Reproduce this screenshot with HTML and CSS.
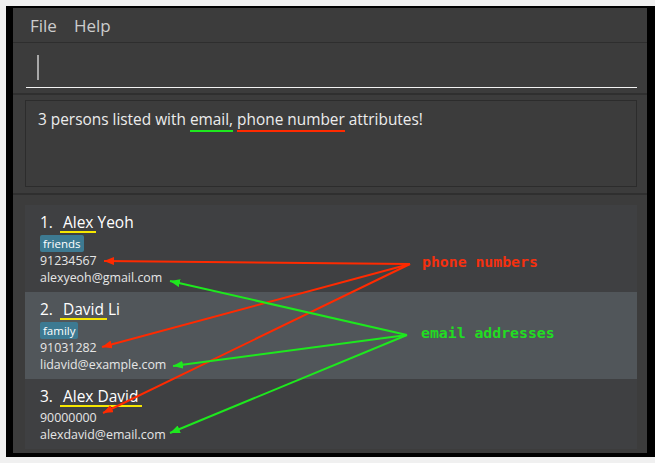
FILE: index.html
```html
<!DOCTYPE html>
<html>
<head>
<meta charset="utf-8">
<link rel="stylesheet" href="styles.css">
</head>
<body>
<div class="frame">
  <div class="window">
    <div class="menubar"><span>File</span><span>Help</span></div>
    <div class="command"><div class="field"><span class="caret"></span></div></div>
    <div class="result">
      <div class="resultbox">
        <p class="msg">3 persons listed with <span class="ul ul-green">email,</span> <span class="ul ul-red">phone number</span> attributes!</p>
      </div>
    </div>
    <div class="list">
      <div class="card">
        <div class="name"><span class="idx">1.</span><span class="hl">Alex</span> Yeoh</div>
        <div class="tags"><span class="tag">friends</span></div>
        <div class="detail">91234567</div>
        <div class="detail">alexyeoh@gmail.com</div>
      </div>
      <div class="card card-alt">
        <div class="name"><span class="idx">2.</span><span class="hl">David</span> Li</div>
        <div class="tags"><span class="tag">family</span></div>
        <div class="detail">91031282</div>
        <div class="detail">lidavid@example.com</div>
      </div>
      <div class="card card-last">
        <div class="name"><span class="idx">3.</span><span class="hl">Alex</span> <span class="hl">David</span></div>
        <div class="detail">90000000</div>
        <div class="detail">alexdavid@email.com</div>
      </div>
    </div>
  </div>
</div>
<svg class="overlay" width="655" height="463" viewBox="0 0 655 463">
  <defs>
    <marker id="ar" viewBox="0 0 10 8" refX="10" refY="4" markerWidth="10" markerHeight="8" markerUnits="userSpaceOnUse" orient="auto">
      <path d="M0,0 L10,4 L0,8 z" fill="#ff2a00"/>
    </marker>
    <marker id="ag" viewBox="0 0 10 8" refX="10" refY="4" markerWidth="10" markerHeight="8" markerUnits="userSpaceOnUse" orient="auto">
      <path d="M0,0 L10,4 L0,8 z" fill="#1ee81e"/>
    </marker>
  </defs>
  <g stroke="#ff2a00" stroke-width="2" marker-end="url(#ar)">
    <line x1="410" y1="264" x2="104" y2="261"/>
    <line x1="410" y1="264" x2="102" y2="347"/>
    <line x1="410" y1="264" x2="103" y2="413"/>
  </g>
  <g stroke="#1ee81e" stroke-width="2" marker-end="url(#ag)">
    <line x1="407" y1="335" x2="170" y2="281"/>
    <line x1="407" y1="335" x2="173" y2="366"/>
    <line x1="407" y1="335" x2="170" y2="433"/>
  </g>
</svg>
<div class="label label-phone">phone numbers</div>
<div class="label label-email">email addresses</div>
</body>
</html>
```
FILE: styles.css
```css
body {
  margin: 0;
  background: #f0f0f0;
  font-family: "Open Sans", "Noto Sans", sans-serif;
  position: relative;
  width: 655px;
  height: 463px;
  overflow: hidden;
}
.frame {
  margin: 6px 0 0 6px;
  width: 649px;
  height: 451px;
  box-sizing: border-box;
  padding: 2px 8px 4px 7px;
  background: #000;
}
.window {
  height: 100%;
  background: #3c3c3c;
  display: flex;
  flex-direction: column;
}
.menubar {
  height: 35px;
  box-sizing: border-box;
  border-bottom: 1px solid #2e2e2e;
  display: flex;
  align-items: center;
  gap: 17px;
  padding-left: 17px;
  font-size: 17px;
  color: #cccccc;
}
.command {
  height: 50px;
  box-sizing: border-box;
  padding: 0 10px 0 13px;
}
.field {
  height: 45px;
  box-sizing: border-box;
  border-bottom: 1px solid #f2f2f2;
  padding: 12px 0 0 11px;
}
.caret {
  display: block;
  width: 2px;
  height: 25px;
  background: #a8a8a8;
}
.result {
  border-top: 2px solid #2f2f2f;
  padding: 5px 10px 6px 12px;
}
.resultbox {
  height: 87px;
  box-sizing: border-box;
  border: 1px solid #2c2c2c;
  padding: 7px 12px;
}
.msg {
  margin: 0;
  font-size: 15.4px;
  line-height: 24px;
  color: #ececec;
}
.ul {
  padding-bottom: 2px;
  background-repeat: no-repeat;
  background-position: left bottom;
  background-size: 100% 2px;
}
.ul-green { background-image: linear-gradient(#1ee81e, #1ee81e); }
.ul-red { background-image: linear-gradient(#ff2a00, #ff2a00); }
.list {
  flex: 1;
  border-top: 2px solid #2f2f2f;
  padding: 10px 10px 0 12px;
}
.card {
  background: #3f4042;
  padding: 7px 10px 6px 15px;
}
.card-alt { background: #51565a; }
.name {
  font-size: 15.5px;
  line-height: 20px;
  color: #ffffff;
}
.idx { margin-right: 10px; }
.hl {
  padding: 0 3px 0 3px;
  margin: 0 -3px;
  background-image: linear-gradient(#f5e600, #f5e600);
  background-repeat: no-repeat;
  background-position: left bottom;
  background-size: 100% 2px;
}
.tags {
  margin-top: 3px;
  display: flex;
}
.tag {
  font-size: 11.5px;
  line-height: 17px;
  padding: 0 3px;
  border-radius: 2px;
  background: #3d7a92;
  color: #ffffff;
}
.detail {
  font-size: 12.4px;
  line-height: 17px;
  color: #e6e6e6;
}
.name + .detail { margin-top: 3px; }
.overlay {
  position: absolute;
  left: 0;
  top: 0;
  pointer-events: none;
}
.label {
  position: absolute;
  font-family: "DejaVu Sans Mono", monospace;
  font-weight: bold;
  font-size: 14.8px;
  line-height: 15px;
  white-space: nowrap;
}
.label-phone { left: 422px; top: 254px; color: #f5300f; }
.label-email { left: 421px; top: 325px; color: #22dd22; }
```
